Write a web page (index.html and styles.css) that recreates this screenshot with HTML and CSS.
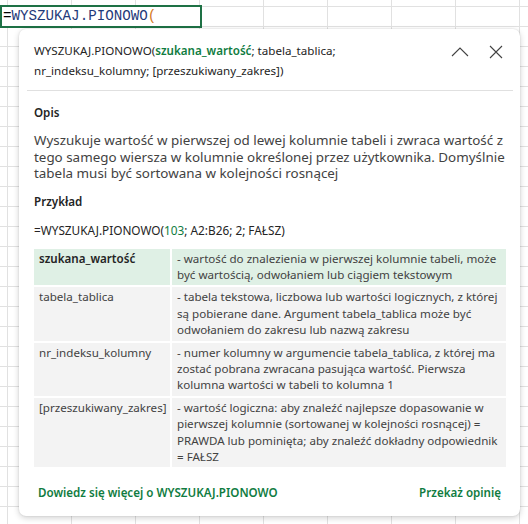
FILE: index.html
```html
<!DOCTYPE html>
<html lang="pl">
<head>
<meta charset="utf-8">
<link rel="stylesheet" href="styles.css">
</head>
<body>
<div class="sheet">
  <div class="cell-edit"><span class="eq">=</span><span class="fn">WYSZUKAJ.PIONOWO</span><span class="paren">(</span></div>

  <div class="card">
    <div class="card-head">
      <div class="sig">WYSZUKAJ.PIONOWO(<span class="cur">szukana_wartość</span>; tabela_tablica;<br>nr_indeksu_kolumny; [przeszukiwany_zakres])</div>
      <div class="head-btns">
        <svg class="ico" width="18" height="18" viewBox="0 0 18 18"><path d="M1 13 L9 5 L17 13" fill="none" stroke="#424242" stroke-width="1.1"/></svg>
        <svg class="ico" width="14" height="14" viewBox="0 0 14 14"><path d="M1 1 L13 13 M13 1 L1 13" fill="none" stroke="#424242" stroke-width="1.1"/></svg>
      </div>
    </div>
    <div class="divider"></div>
    <div class="body">
      <div class="label">Opis</div>
      <p class="desc">Wyszukuje wartość w pierwszej od lewej kolumnie tabeli i zwraca wartość z tego samego wiersza w kolumnie określonej przez użytkownika. Domyślnie tabela musi być sortowana w kolejności rosnącej</p>
      <div class="label">Przykład</div>
      <div class="example">=WYSZUKAJ.PIONOWO(<span class="num">103</span>; A2:B26; 2; FAŁSZ)</div>
      <div class="args">
        <div class="arg active"><div class="name">szukana_wartość</div><div class="info">- wartość do znalezienia w pierwszej kolumnie tabeli, może być wartością, odwołaniem lub ciągiem tekstowym</div></div>
        <div class="arg"><div class="name">tabela_tablica</div><div class="info">- tabela tekstowa, liczbowa lub wartości logicznych, z której są pobierane dane. Argument tabela_tablica może być odwołaniem do zakresu lub nazwą zakresu</div></div>
        <div class="arg"><div class="name">nr_indeksu_kolumny</div><div class="info">- numer kolumny w argumencie tabela_tablica, z której ma zostać pobrana zwracana pasująca wartość. Pierwsza kolumna wartości w tabeli to kolumna 1</div></div>
        <div class="arg"><div class="name">[przeszukiwany_zakres]</div><div class="info">- wartość logiczna: aby znaleźć najlepsze dopasowanie w pierwszej kolumnie (sortowanej w kolejności rosnącej) = PRAWDA lub pominięta; aby znaleźć dokładny odpowiednik = FAŁSZ</div></div>
      </div>
    </div>
    <div class="foot">
      <a class="link">Dowiedz się więcej o WYSZUKAJ.PIONOWO</a>
      <a class="link">Przekaż opinię</a>
    </div>
  </div>
</div>
</body>
</html>
```
FILE: styles.css
```css
html, body {
  margin: 0;
  padding: 0;
}
body {
  width: 528px;
  height: 524px;
  overflow: hidden;
  background: #fff;
  font-family: "Noto Sans", "Open Sans", sans-serif;
  color: #242424;
}
.sheet {
  position: relative;
  width: 528px;
  height: 524px;
  background-color: #fff;
  background-image:
    repeating-linear-gradient(to right, transparent 0 7px, #e1e1e1 7px 8px, transparent 8px 64px),
    repeating-linear-gradient(to bottom, transparent 0 6px, #e1e1e1 6px 7px, transparent 7px 20px);
  background-size: 64px 100%, 100% 20px;
  background-position: 0 0, 0 0;
}
.cell-edit {
  position: absolute;
  left: 0;
  top: 5px;
  width: 197px;
  height: 19px;
  border: 2px solid #1e7145;
  background: #fff;
  font-family: "Liberation Mono", "DejaVu Sans Mono", monospace;
  font-size: 14.2px;
  line-height: 19px;
  padding-left: 1px;
  white-space: nowrap;
}
.eq { color: #000; }
.fn { color: #1f3a7a; }
.paren { color: #d4781c; }

.card {
  position: absolute;
  left: 19px;
  top: 29px;
  width: 501px;
  height: 487px;
  box-sizing: border-box;
  background: #fff;
  border-radius: 7px;
  box-shadow: 0 2px 6px rgba(0,0,0,0.18), 0 0 2px rgba(0,0,0,0.12);
  display: flex;
  flex-direction: column;
}
.card-head {
  display: flex;
  justify-content: space-between;
  align-items: flex-start;
  padding: 12px 17px 0 15px;
  box-sizing: border-box;
  height: 61px;
}
.sig {
  font-size: 11.6px;
  line-height: 20px;
  color: #242424;
}
.cur {
  color: #107c41;
  font-weight: 600;
}
.head-btns {
  display: flex;
  gap: 20px;
  align-items: center;
  padding-top: 2px;
}
.divider {
  height: 1px;
  background: #e0e0e0;
  margin: 0 7px 0 8px;
}
.body {
  padding: 0 10px 0 15px;
  flex: 1;
}
.label {
  font-size: 11.6px;
  font-weight: 600;
  color: #242424;
  line-height: 18px;
}
.body > .label:first-child {
  margin-top: 13px;
}
.desc {
  margin: 10px 0 11px;
  font-size: 13.4px;
  line-height: 16.5px;
  color: #424242;
}
.example {
  margin-top: 10px;
  font-size: 11.8px;
  line-height: 18px;
  color: #242424;
}
.num { color: #107c41; }
.args {
  margin-top: 10px;
  display: flex;
  flex-direction: column;
  gap: 2px;
  width: 472px;
}
.arg {
  display: grid;
  grid-template-columns: 136px 1fr;
  column-gap: 2px;
  font-size: 11.6px;
  line-height: 16.4px;
  color: #424242;
}
.arg .name, .arg .info {
  background: #f3f3f3;
  padding: 2px 2px 2px 5px;
}
.arg.active .name, .arg.active .info {
  background: #dff0e5;
}
.arg.active .name {
  font-weight: 600;
  color: #242424;
}
.foot {
  display: flex;
  justify-content: space-between;
  padding: 0 19px 14px 19px;
}
.link {
  color: #107c41;
  font-weight: 600;
  font-size: 11.6px;
  line-height: 18px;
}
```
